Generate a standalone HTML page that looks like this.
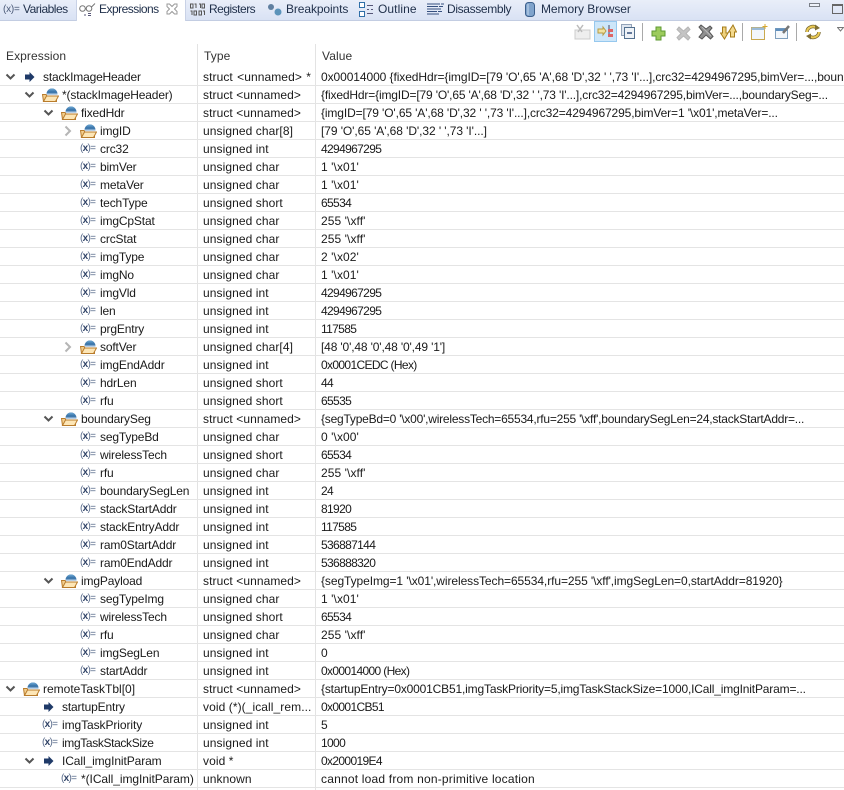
<!DOCTYPE html>
<html><head><meta charset="utf-8"><style>
html,body{margin:0;padding:0;background:#fff}
#p{position:relative;width:844px;height:790px;overflow:hidden;background:#fff;font:12px "Liberation Sans",sans-serif;color:#1a1a1a;letter-spacing:.08px}
#bar{position:absolute;left:0;top:0;width:844px;height:20px;background:linear-gradient(#e9eef9,#d9e2f4);border-bottom:1px solid #c3cde2}
#act{position:absolute;left:76px;top:0;width:108px;height:21px;background:#fff;border-left:1px solid #c9d2e6;border-right:1px solid #c9d2e6}
.tab{position:absolute;top:2px;height:15px;line-height:15px;white-space:nowrap;color:#1f2f4a}
.tic{position:absolute}
.vl{position:absolute;top:44px;bottom:0;width:1px;background:#e3e3e3}
.h{position:absolute;top:50px;line-height:13px;color:#333}
#rows{position:absolute;left:0;top:68px;width:844px}
.r{position:relative;height:17px;border-bottom:1px solid #e4e4e4;white-space:nowrap}
.l0{--x:0px}.l1{--x:19px}.l2{--x:38px}.l3{--x:57px}
.r>*{position:absolute}
.n,.t,.v{top:2px;line-height:14px}
.n{left:calc(var(--x) + 43px);letter-spacing:-.15px}
.t{left:203px;width:112px;overflow:hidden}
.v{left:321px}
.d{letter-spacing:-.65px}
.e{left:calc(var(--x) + 5px);top:5px}
.c{left:calc(var(--x) + 7px);top:3px}
.f{left:calc(var(--x) + 23px);top:1px}
.a{left:calc(var(--x) + 25px);top:4px}
.x{left:calc(var(--x) + 23px);top:3px;font-size:10px;line-height:12px;color:#5a6c8c;letter-spacing:-.7px}
.x b{color:#2f4266}
.sep{position:absolute;top:23px;width:1px;height:18px;background:#a9a9a9}
</style></head><body><div id="p">
<svg width="0" height="0" style="position:absolute"><defs>
<symbol id="fo" viewBox="0 0 17 15"><path d="M4.500 7a5.500 5.500 0 0 1 11 0z" fill="#3f79ad"/><path d="M6 3.500a5 5 0 0 1 8 0z" fill="#5f9ac9"/><path d="M4.500 6.500h11v1.500h-11z" fill="#b9d0e6"/><path d="M.500 7.500h3.500l1 1.500h9.500v5.500H1.500z" fill="#f3cf8e" stroke="#b97c2c"/><path d="M1.500 14.500L4.500 9H16.500L13.500 14.500z" fill="#fde6b6" stroke="#b97c2c"/></symbol>
<symbol id="ar" viewBox="0 0 10 10"><path d="M0 2.500h4.500V0l5 5-5 5V7.500H0z" fill="#1f3a68"/></symbol>
<symbol id="dn" viewBox="0 0 11 8"><path d="M1.500 1.500L5.500 5.500L9.500 1.500" fill="none" stroke="#555" stroke-width="2"/></symbol>
<symbol id="rt" viewBox="0 0 8 12"><path d="M1.500 1.500L6 6L1.500 10.500" fill="none" stroke="#b5b5b5" stroke-width="2"/></symbol>
</defs></svg>

<div id="bar"></div><div id="act"></div>
<div class="tab" style="left:3px;font-size:10px;color:#4b5a78;letter-spacing:-.2px">(x)=</div>
<div class="tab" style="left:23px;letter-spacing:-.5px">Variables</div>
<svg class="tic" style="left:79px;top:2px" width="17" height="15" viewBox="0 0 17 15"><circle cx="3.500" cy="6.500" r="2.800" fill="none" stroke="#777"/><circle cx="10" cy="6.500" r="2.800" fill="none" stroke="#777"/><path d="M6.300 6.500h1M12.500 5l3.500-3.500" stroke="#777" fill="none"/><path d="M5 13h2M9 11.500h3M9 13.500h3" stroke="#557"/></svg>
<div class="tab" style="left:99px;letter-spacing:-.52px">Expressions</div>
<svg class="tic" style="left:166px;top:3px" width="12" height="12" viewBox="0 0 12 12"><path d="M1 1h2.500L6 3.500 8.500 1H11V3.500L8.500 6 11 8.500V11H8.500L6 8.500 3.500 11H1V8.500L3.500 6 1 3.500z" fill="none" stroke="#999"/></svg>
<svg class="tic" style="left:190px;top:3px" width="15" height="13" viewBox="0 0 15 13"><g fill="none" stroke="#555" stroke-width="1"><path d="M.5 1h2.500v4H.5zM4.500 1h1.500v4"/><path d="M9 1h1.500v4M12 1h2.500v4H12zM.5 8h1.500v4M4 8h2.500v4H4zM9 8h2.500v4H9zM13 8h1.500v4"/></g></svg>
<div class="tab" style="left:209px;letter-spacing:-.5px">Registers</div>
<svg class="tic" style="left:267px;top:3px" width="15" height="13" viewBox="0 0 15 13"><circle cx="4" cy="4" r="3" fill="#5f7fa0"/><circle cx="11" cy="9" r="3.500" fill="#5b93ba"/></svg>
<div class="tab" style="left:286px;letter-spacing:-.1px">Breakpoints</div>
<svg class="tic" style="left:359px;top:2px" width="15" height="15" viewBox="0 0 15 15"><path d="M.5.500h5v5h-5zM.5 9.500h5v5h-5z" fill="#fff" stroke="#2f6fa8"/><path d="M8 3.500h6M8 7.500h2M12 7.500h2M8 11.500h6" stroke="#557"/></svg>
<div class="tab" style="left:378px">Outline</div>
<svg class="tic" style="left:427px;top:3px" width="17" height="12" viewBox="0 0 17 12"><path d="M0 1h13M14 1h3M0 3.500h11M12 3.500h4M0 6h14M0 8.500h10M11 8.500h4M0 11h12" stroke="#35507f"/></svg>
<div class="tab" style="left:447px;letter-spacing:-.35px">Disassembly</div>
<svg class="tic" style="left:525px;top:2px" width="10" height="15" viewBox="0 0 10 15"><rect x=".5" y=".5" width="9" height="14" rx="3" fill="#7fa3cc" stroke="#3b5f8c"/><path d="M3 2v11" stroke="#c4d8ee"/></svg>
<div class="tab" style="left:541px;letter-spacing:-.06px">Memory Browser</div>
<div style="position:absolute;left:809px;top:3px;width:9px;height:2px;border:1px solid #7a7f88;background:#eef2fa"></div>
<div style="position:absolute;left:832px;top:4px;width:9px;height:7px;border:1px solid #666;border-top-width:2px"></div>

<svg class="tic" style="left:574px;top:23px" width="17" height="17" viewBox="0 0 17 17"><path d="M1 7h15v9H1z" fill="#eee" stroke="#ccc"/><path d="M3 2l5 7M4 9l5-7" stroke="#bbb" stroke-width="1.500"/></svg>
<div style="position:absolute;left:594px;top:21px;width:21px;height:19px;background:#cde6f9;border:1px solid #96c8ee"></div>
<svg class="tic" style="left:597px;top:24px" width="17" height="15" viewBox="0 0 17 15"><path d="M1 5h5V3l3 4-3 4V9H1z" fill="#f0e2a0" stroke="#b79b44"/><path d="M12 1v12" stroke="#446"/><path d="M11 5h5v3h-5zM11 10h5v3h-5z" fill="#d66" /></svg>
<svg class="tic" style="left:621px;top:24px" width="15" height="16" viewBox="0 0 15 16"><path d="M.5.500h10v11H.5z" fill="#dfe6f0" stroke="#93a3b8"/><path d="M3.500 3.500h10v11h-10z" fill="#eef2f7" stroke="#53708f"/><path d="M6 9h5" stroke="#33507a" stroke-width="1.500"/></svg>
<div class="sep" style="left:642px"></div>
<svg class="tic" style="left:651px;top:26px" width="15" height="15" viewBox="0 0 15 15"><path d="M5 1h5v4h4v5h-4v4H5v-4H1V5h4z" fill="#9ccb5c" stroke="#5e9a32"/></svg>
<svg class="tic" style="left:676px;top:26px" width="15" height="15" viewBox="0 0 15 15"><path d="M3 1l4.500 4L12 1l2 2.500L10 7.500l4 4-2 2.500-4.500-4L3 14l-2-2.500L5 7.500 1 3.500z" fill="#c4c4c4" stroke="#b5b5b5"/></svg>
<svg class="tic" style="left:698px;top:24px" width="17" height="16" viewBox="0 0 17 16"><path d="M3 1l5 4 4-3 2 2-3 3.500 4 5-2.500 2.500-4.500-4-4 4L1 13l4-5L1 3z" fill="#8f8f8f" stroke="#555"/><path d="M4 3l9 9" stroke="#bbb"/></svg>
<svg class="tic" style="left:720px;top:24px" width="17" height="16" viewBox="0 0 17 16"><path d="M2.500 9H.500l4 6 3.500-6H6V3H2.500z" fill="#efd27e" stroke="#a57c1a"/><path d="M10.500 8H8.500L13 1l3.500 7H14.500v5h-4z" fill="#f3d98d" stroke="#a57c1a"/></svg>
<div class="sep" style="left:742px"></div>
<svg class="tic" style="left:751px;top:24px" width="17" height="16" viewBox="0 0 17 16"><path d="M.5 3.500h13v12H.5z" fill="#f3f7fb" stroke="#c9a94f"/><path d="M.5 3.500h13v2.500H.5z" fill="#9bbbd8"/><path d="M14 0v5M11.500 2.500h5" stroke="#d9a82c"/></svg>
<svg class="tic" style="left:775px;top:24px" width="16" height="16" viewBox="0 0 16 16"><path d="M.5 4.500h12v10H.5z" fill="#f3f7fb" stroke="#7f9fbd"/><path d="M.5 4.500h12v2.500H.5z" fill="#5f8fbd"/><path d="M8 9l6-7" stroke="#777" stroke-width="2.500"/></svg>
<div class="sep" style="left:796px"></div>
<svg class="tic" style="left:805px;top:24px" width="16" height="16" viewBox="0 0 16 16"><path d="M2 8a6 5.500 0 0 1 10-4M14 8a6 5.500 0 0 1-10 4" fill="none" stroke="#7a6a30" stroke-width="3.500"/><path d="M2 8a6 5.500 0 0 1 10-4M14 8a6 5.500 0 0 1-10 4" fill="none" stroke="#eccb55" stroke-width="2"/><path d="M10 .5l5 3.500-5 2.500zM6 9.500l-5 2.500 5 3.500z" fill="#7f6f35"/></svg>
<svg class="tic" style="left:837px;top:27px" width="7" height="5" viewBox="0 0 7 5"><path d="M.5.500h6L3.500 4z" fill="#fff" stroke="#777"/></svg>

<div class="vl" style="left:197px"></div><div class="vl" style="left:315px"></div>
<div class="h" style="left:6px">Expression</div><div class="h" style="left:204px">Type</div><div class="h" style="left:322px">Value</div>

<div id="rows">
<div class="r l0"><svg class="e" width="11" height="8"><use href="#dn"/></svg><svg class="a" width="10" height="10"><use href="#ar"/></svg><span class="n" style="letter-spacing:-.18px">stackImageHeader</span><span class="t" style="word-spacing:.9px">struct &lt;unnamed&gt; *</span><span class="v" style="letter-spacing:-.08px">0x00014000 {fixedHdr={imgID=[79 'O',65 'A',68 'D',32 ' ',73 'I'...],crc32=4294967295,bimVer=...,boundarySeg=...</span></div>
<div class="r l1"><svg class="e" width="11" height="8"><use href="#dn"/></svg><svg class="f" width="17" height="15"><use href="#fo"/></svg><span class="n">*(stackImageHeader)</span><span class="t">struct &lt;unnamed&gt;</span><span class="v" style="letter-spacing:-.16px">{fixedHdr={imgID=[79 'O',65 'A',68 'D',32 ' ',73 'I'...],crc32=4294967295,bimVer=...,boundarySeg=...</span></div>
<div class="r l2"><svg class="e" width="11" height="8"><use href="#dn"/></svg><svg class="f" width="17" height="15"><use href="#fo"/></svg><span class="n">fixedHdr</span><span class="t">struct &lt;unnamed&gt;</span><span class="v" style="letter-spacing:-.12px">{imgID=[79 'O',65 'A',68 'D',32 ' ',73 'I'...],crc32=4294967295,bimVer=1 '\x01',metaVer=...</span></div>
<div class="r l3"><svg class="c" width="8" height="12"><use href="#rt"/></svg><svg class="f" width="17" height="15"><use href="#fo"/></svg><span class="n">imgID</span><span class="t">unsigned char[8]</span><span class="v" style="letter-spacing:-.08px">[79 'O',65 'A',68 'D',32 ' ',73 'I'...]</span></div>
<div class="r l3"><span class="x">(<b>x</b>)=</span><span class="n">crc32</span><span class="t">unsigned int</span><span class="v d">4294967295</span></div>
<div class="r l3"><span class="x">(<b>x</b>)=</span><span class="n">bimVer</span><span class="t">unsigned char</span><span class="v">1 '\x01'</span></div>
<div class="r l3"><span class="x">(<b>x</b>)=</span><span class="n">metaVer</span><span class="t">unsigned char</span><span class="v">1 '\x01'</span></div>
<div class="r l3"><span class="x">(<b>x</b>)=</span><span class="n">techType</span><span class="t">unsigned short</span><span class="v d">65534</span></div>
<div class="r l3"><span class="x">(<b>x</b>)=</span><span class="n">imgCpStat</span><span class="t">unsigned char</span><span class="v">255 '\xff'</span></div>
<div class="r l3"><span class="x">(<b>x</b>)=</span><span class="n">crcStat</span><span class="t">unsigned char</span><span class="v">255 '\xff'</span></div>
<div class="r l3"><span class="x">(<b>x</b>)=</span><span class="n">imgType</span><span class="t">unsigned char</span><span class="v">2 '\x02'</span></div>
<div class="r l3"><span class="x">(<b>x</b>)=</span><span class="n">imgNo</span><span class="t">unsigned char</span><span class="v">1 '\x01'</span></div>
<div class="r l3"><span class="x">(<b>x</b>)=</span><span class="n">imgVld</span><span class="t">unsigned int</span><span class="v d">4294967295</span></div>
<div class="r l3"><span class="x">(<b>x</b>)=</span><span class="n">len</span><span class="t">unsigned int</span><span class="v d">4294967295</span></div>
<div class="r l3"><span class="x">(<b>x</b>)=</span><span class="n">prgEntry</span><span class="t">unsigned int</span><span class="v d">117585</span></div>
<div class="r l3"><svg class="c" width="8" height="12"><use href="#rt"/></svg><svg class="f" width="17" height="15"><use href="#fo"/></svg><span class="n">softVer</span><span class="t">unsigned char[4]</span><span class="v" style="letter-spacing:-.15px">[48 '0',48 '0',48 '0',49 '1']</span></div>
<div class="r l3"><span class="x">(<b>x</b>)=</span><span class="n">imgEndAddr</span><span class="t">unsigned int</span><span class="v d">0x0001CEDC (Hex)</span></div>
<div class="r l3"><span class="x">(<b>x</b>)=</span><span class="n">hdrLen</span><span class="t">unsigned short</span><span class="v d">44</span></div>
<div class="r l3"><span class="x">(<b>x</b>)=</span><span class="n">rfu</span><span class="t">unsigned short</span><span class="v d">65535</span></div>
<div class="r l2"><svg class="e" width="11" height="8"><use href="#dn"/></svg><svg class="f" width="17" height="15"><use href="#fo"/></svg><span class="n">boundarySeg</span><span class="t">struct &lt;unnamed&gt;</span><span class="v" style="letter-spacing:-.22px">{segTypeBd=0 '\x00',wirelessTech=65534,rfu=255 '\xff',boundarySegLen=24,stackStartAddr=...</span></div>
<div class="r l3"><span class="x">(<b>x</b>)=</span><span class="n">segTypeBd</span><span class="t">unsigned char</span><span class="v">0 '\x00'</span></div>
<div class="r l3"><span class="x">(<b>x</b>)=</span><span class="n">wirelessTech</span><span class="t">unsigned short</span><span class="v d">65534</span></div>
<div class="r l3"><span class="x">(<b>x</b>)=</span><span class="n">rfu</span><span class="t">unsigned char</span><span class="v">255 '\xff'</span></div>
<div class="r l3"><span class="x">(<b>x</b>)=</span><span class="n">boundarySegLen</span><span class="t">unsigned int</span><span class="v d">24</span></div>
<div class="r l3"><span class="x">(<b>x</b>)=</span><span class="n">stackStartAddr</span><span class="t">unsigned int</span><span class="v d">81920</span></div>
<div class="r l3"><span class="x">(<b>x</b>)=</span><span class="n">stackEntryAddr</span><span class="t">unsigned int</span><span class="v d">117585</span></div>
<div class="r l3"><span class="x">(<b>x</b>)=</span><span class="n">ram0StartAddr</span><span class="t">unsigned int</span><span class="v d">536887144</span></div>
<div class="r l3"><span class="x">(<b>x</b>)=</span><span class="n">ram0EndAddr</span><span class="t">unsigned int</span><span class="v d">536888320</span></div>
<div class="r l2"><svg class="e" width="11" height="8"><use href="#dn"/></svg><svg class="f" width="17" height="15"><use href="#fo"/></svg><span class="n">imgPayload</span><span class="t">struct &lt;unnamed&gt;</span><span class="v" style="letter-spacing:-.08px">{segTypeImg=1 '\x01',wirelessTech=65534,rfu=255 '\xff',imgSegLen=0,startAddr=81920}</span></div>
<div class="r l3"><span class="x">(<b>x</b>)=</span><span class="n">segTypeImg</span><span class="t">unsigned char</span><span class="v">1 '\x01'</span></div>
<div class="r l3"><span class="x">(<b>x</b>)=</span><span class="n">wirelessTech</span><span class="t">unsigned short</span><span class="v d">65534</span></div>
<div class="r l3"><span class="x">(<b>x</b>)=</span><span class="n">rfu</span><span class="t">unsigned char</span><span class="v">255 '\xff'</span></div>
<div class="r l3"><span class="x">(<b>x</b>)=</span><span class="n">imgSegLen</span><span class="t">unsigned int</span><span class="v d">0</span></div>
<div class="r l3"><span class="x">(<b>x</b>)=</span><span class="n">startAddr</span><span class="t">unsigned int</span><span class="v d">0x00014000 (Hex)</span></div>
<div class="r l0"><svg class="e" width="11" height="8"><use href="#dn"/></svg><svg class="f" width="17" height="15"><use href="#fo"/></svg><span class="n" style="letter-spacing:0">remoteTaskTbl[0]</span><span class="t">struct &lt;unnamed&gt;</span><span class="v" style="letter-spacing:-.17px">{startupEntry=0x0001CB51,imgTaskPriority=5,imgTaskStackSize=1000,ICall_imgInitParam=...</span></div>
<div class="r l1"><svg class="a" width="10" height="10"><use href="#ar"/></svg><span class="n">startupEntry</span><span class="t">void (*)(_icall_rem...</span><span class="v d">0x0001CB51</span></div>
<div class="r l1"><span class="x">(<b>x</b>)=</span><span class="n" style="letter-spacing:-.08px">imgTaskPriority</span><span class="t">unsigned int</span><span class="v d">5</span></div>
<div class="r l1"><span class="x">(<b>x</b>)=</span><span class="n" style="letter-spacing:-.36px">imgTaskStackSize</span><span class="t">unsigned int</span><span class="v d">1000</span></div>
<div class="r l1"><svg class="e" width="11" height="8"><use href="#dn"/></svg><svg class="a" width="10" height="10"><use href="#ar"/></svg><span class="n" style="letter-spacing:-.1px">ICall_imgInitParam</span><span class="t">void *</span><span class="v d">0x200019E4</span></div>
<div class="r l2"><span class="x">(<b>x</b>)=</span><span class="n" style="letter-spacing:-.06px">*(ICall_imgInitParam)</span><span class="t">unknown</span><span class="v" style="letter-spacing:.2px">cannot load from non-primitive location</span></div>
</div>
</div></body></html>
